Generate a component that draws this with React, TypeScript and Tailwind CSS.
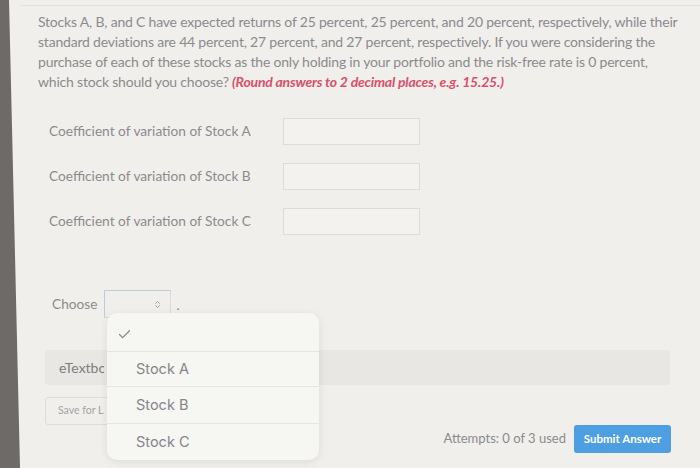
import { Check, ChevronsUpDown } from "lucide-react";

const fields = ["A", "B", "C"];

const App = () => {
    return (
        <div className="relative w-[700px] h-[468px] overflow-hidden flex bg-[#f0efeb] font-['Lato','Liberation_Sans',sans-serif] text-[#8b8b8f]">
            <div className="w-[20px] shrink-0 bg-[#6d6a68] [clip-path:polygon(0_0,9px_0,20px_100%,0_100%)]"></div>
            <div className="flex-1 flex flex-col border-t border-[#e4e3df] mt-[5px]">
                <p className="pl-[18px] pt-[6px] text-[14px] leading-[20px] tracking-[-0.2px] whitespace-nowrap">
                    Stocks A, B, and C have expected returns of 25 percent, 25 percent, and 20 percent, respectively, while their<br />
                    standard deviations are 44 percent, 27 percent, and 27 percent, respectively. If you were considering the<br />
                    purchase of each of these stocks as the only holding in your portfolio and the risk-free rate is 0 percent,<br />
                    which stock should you choose? <span className="font-bold italic text-[#d9506b]">(Round answers to 2 decimal places, e.g. 15.25.)</span>
                </p>

                <div className="flex flex-col gap-[18px] mt-[26px]">
                    {fields.map((f) => (
                        <div key={f} className="flex items-center h-[27px]">
                            <span className="w-[263px] pl-[29px] text-[13.7px]">Coefficient of variation of Stock {f}</span>
                            <div className="w-[137px] h-[27px] border border-[#dddcd7] bg-[#f3f2ee]"></div>
                        </div>
                    ))}
                </div>

                <div className="flex items-center mt-[55px] pl-[32px] h-[28px]">
                    <span className="text-[13.7px]">Choose</span>
                    <div className="ml-[7px] w-[67px] h-[28px] border border-[#dad9d4] border-l-[#b9cde0] border-t-[#b9cde0] flex items-center justify-end pr-[8px]">
                        <ChevronsUpDown size={9} strokeWidth={2.5} className="text-[#9a9a9e]" />
                    </div>
                    <span className="ml-[5px] text-[13px] mt-[4px]">.</span>
                </div>

                <div className="mt-[32px] ml-[25px] mr-[30px] h-[35px] rounded-[3px] bg-[#e8e7e3] flex items-center pl-[14px]">
                    <span className="w-[45px] overflow-hidden whitespace-nowrap text-[14px] text-[#7d7d82]">eTextbook and Media</span>
                </div>

                <div className="mt-[12px] ml-[25px] w-[104px] h-[28px] rounded-[3px] border border-[#dddcd7] flex items-center pl-[12px]">
                    <span className="w-[46px] overflow-hidden whitespace-nowrap text-[10.5px] text-[#a4a4a7]">Save for Later</span>
                </div>

                <div className="flex items-center justify-end gap-[8px] mr-[29px] h-[28px]">
                    <span className="text-[13px]">Attempts: 0 of 3 used</span>
                    <button className="w-[97px] h-[28px] rounded-[3px] bg-[#4d9fe2] text-white text-[11.5px] font-bold">Submit Answer</button>
                </div>
            </div>

            <div className="absolute left-[107px] top-[313px] w-[212px] h-[147px] rounded-[10px] bg-[#f6f6f3] shadow-[0_2px_10px_rgba(0,0,0,0.08)] flex flex-col font-['Inter','Open_Sans',sans-serif] text-[14.5px] text-[#85858b]">
                <div className="h-[39px] flex items-center pl-[10px] pt-[4px] border-b border-[#e6e5e1]">
                    <Check size={15} strokeWidth={2} className="text-[#8a8a8e]" />
                </div>
                <div className="h-[35px] flex items-center pl-[29px] border-b border-[#e6e5e1]">Stock A</div>
                <div className="h-[37px] flex items-center pl-[29px] border-b border-[#e6e5e1]">Stock B</div>
                <div className="h-[36px] flex items-center pl-[29px]">Stock C</div>
            </div>
        </div>
    );
};

export default App;
